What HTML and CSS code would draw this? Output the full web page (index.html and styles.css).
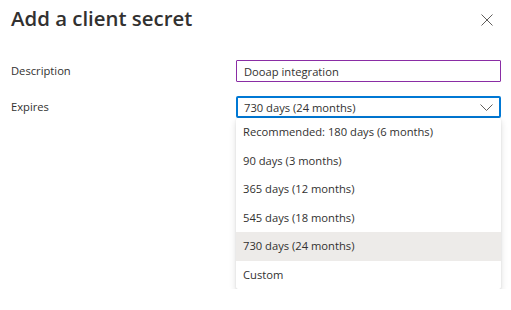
FILE: index.html
```html
<!DOCTYPE html>
<html lang="en">
<head>
    <meta charset="UTF-8">
    <meta name="viewport" content="width=device-width, initial-scale=1.0">
    <title>Add a client secret</title>
    <link rel="stylesheet" href="styles.css">
</head>
<body>
    <div class="panel">
        <div class="panelHeader">
            <h1 class="panelTitle">Add a client secret</h1>
            <button class="closeBtn" aria-label="Close">
                <svg width="12" height="12" viewBox="0 0 12 12">
                    <path d="M0.5 0.5 L11.5 11.5 M11.5 0.5 L0.5 11.5" stroke="#605e5c" stroke-width="1" fill="none"/>
                </svg>
            </button>
        </div>

        <div class="form">
            <div class="formRow">
                <label class="formLabel" for="description">Description</label>
                <input class="textField" id="description" type="text" value="Dooap integration">
            </div>
            <div class="formRow">
                <span class="formLabel">Expires</span>
                <div class="dropdown">
                    <div class="dropdownTitle">
                        <span>730 days (24 months)</span>
                        <svg class="chevron" width="13" height="7" viewBox="0 0 13 7">
                            <path d="M0.5 0.5 L6.5 6.5 L12.5 0.5" stroke="#605e5c" stroke-width="1" fill="none"/>
                        </svg>
                    </div>
                </div>
            </div>
            <div class="formRow">
                <span></span>
                <ul class="dropdownList">
                    <li>Recommended: 180 days (6 months)</li>
                    <li>90 days (3 months)</li>
                    <li>365 days (12 months)</li>
                    <li>545 days (18 months)</li>
                    <li class="selected">730 days (24 months)</li>
                    <li>Custom</li>
                </ul>
            </div>
        </div>
    </div>
</body>
</html>
```

FILE: styles.css
```css
body {
    margin: 0;
    background-color: #ffffff;
    font-family: "Open Sans", "Noto Sans", sans-serif;
    color: #323130;
}
.panel {
    padding: 4px 10px 0 11px;
}
.panelHeader {
    display: flex;
    justify-content: space-between;
    align-items: flex-start;
}
.panelTitle {
    margin: 0;
    font-size: 20.4px;
    font-weight: 600;
    line-height: 28px;
    color: #323130;
}
.closeBtn {
    background: none;
    border: none;
    padding: 0;
    margin: 10px 8px 0 0;
    width: 12px;
    height: 12px;
    cursor: pointer;
}
.closeBtn svg {
    display: block;
}
.form {
    margin-top: 28px;
    display: flex;
    flex-direction: column;
}
.formRow {
    display: grid;
    grid-template-columns: 225px 1fr;
    align-items: center;
}
.formRow + .formRow {
    margin-top: 14px;
}
.formRow:last-child {
    margin-top: 0;
}
.formLabel {
    font-size: 11.2px;
    line-height: 22px;
}
.textField {
    box-sizing: border-box;
    height: 22px;
    width: 100%;
    margin: 0;
    padding: 0 7px;
    border: 1px solid #8a2da5;
    border-radius: 1px;
    font-family: inherit;
    font-size: 11.2px;
    color: #323130;
    outline: none;
}
.dropdownTitle {
    box-sizing: border-box;
    height: 22px;
    display: flex;
    align-items: center;
    justify-content: space-between;
    padding: 0 6px 0 6px;
    border: 2px solid #0078d4;
    border-radius: 2px;
    font-size: 11.2px;
}
.chevron {
    display: block;
}
.dropdownList {
    margin: 0;
    padding: 0;
    list-style-type: none;
    background-color: #ffffff;
    border-radius: 2px;
    box-shadow: 0 3.2px 7.2px rgba(0, 0, 0, 0.132), 0 0.6px 1.8px rgba(0, 0, 0, 0.108);
}
.dropdownList li {
    height: 28.5px;
    line-height: 28.5px;
    padding: 0 7px;
    font-size: 11.2px;
}
.dropdownList li.selected {
    background-color: #edebe9;
}
```
